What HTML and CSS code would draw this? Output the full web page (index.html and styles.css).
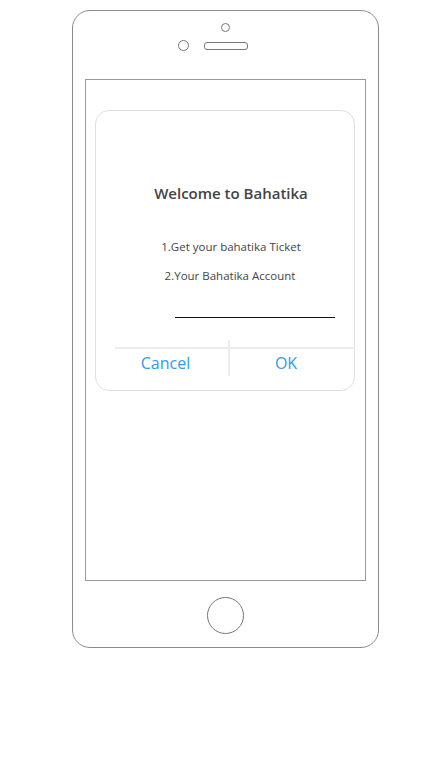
FILE: index.html
```html
<!DOCTYPE html>
<html>
<head>
<meta charset="utf-8">
<link rel="stylesheet" href="styles.css">
</head>
<body>
<div class="phone">
  <div class="top">
    <div class="camera"></div>
    <div class="sensors">
      <div class="lens"></div>
      <div class="speaker"></div>
    </div>
  </div>
  <div class="screen">
    <div class="dialog">
      <div class="title">Welcome to Bahatika</div>
      <div class="line l1">1.Get your bahatika Ticket</div>
      <div class="line l2">2.Your Bahatika Account</div>
      <div class="input"></div>
      <div class="actions">
        <div class="btn cancel">Cancel</div>
        <div class="divider"></div>
        <div class="btn ok">OK</div>
      </div>
    </div>
  </div>
  <div class="bottom">
    <div class="home"></div>
  </div>
</div>
</body>
</html>
```
FILE: styles.css
```css
html, body { margin: 0; padding: 0; background: #fff; }
body { font-family: "Open Sans", "Liberation Sans", sans-serif; }
.phone {
  box-sizing: border-box;
  width: 307px; height: 638px;
  margin: 10px 0 0 72px;
  border: 1px solid #8c8c8c;
  border-radius: 18px;
  display: flex; flex-direction: column;
}
.top { height: 68px; display: flex; flex-direction: column; align-items: center; }
.camera {
  box-sizing: border-box;
  width: 9px; height: 9px; border: 1px solid #777; border-radius: 50%;
  margin: 12px 0 0 0;
}
.sensors { display: flex; align-items: center; margin: 8px 0 0 -25px; }
.lens { box-sizing: border-box; width: 11px; height: 11px; border: 1px solid #777; border-radius: 50%; }
.speaker { box-sizing: border-box; width: 44px; height: 8px; border: 1px solid #777; border-radius: 3px; margin-left: 15px; }
.screen {
  box-sizing: border-box;
  height: 502px; margin: 0 12px;
  border: 1px solid #999;
  padding: 30px 10px 0 9px;
}
.dialog {
  box-sizing: border-box;
  height: 281px;
  border: 1px solid #e0e0e0;
  border-radius: 14px;
  display: flex; flex-direction: column; align-items: center;
  color: #444;
}
.title { margin-top: 72px; font-size: 15px; font-weight: 600; line-height: 20px; padding-left: 12px; }
.line { font-size: 11.5px; line-height: 16px; }
.l1 { margin-top: 36px; padding-left: 12px; }
.l2 { margin-top: 13px; padding-left: 10px; }
.input { width: 160px; height: 1px; background: #111; margin: 33px 0 0 60px; }
.actions {
  align-self: stretch; margin: 29px 0 0 19px;
  border-top: 2px solid #ececec;
  display: flex; height: 43px;
}
.btn { font-size: 16px; color: #2e9bf0; line-height: 20px; padding-top: 4px; }
.cancel { width: 113px; text-align: center; padding-right: 12px; box-sizing: border-box; }
.divider { width: 2px; background: #ececec; margin-top: -9px; height: 36px; }
.ok { flex: 1; text-align: center; padding-right: 12px; }
.bottom { flex: 1; display: flex; justify-content: center; align-items: center; }
.home { box-sizing: border-box; width: 37px; height: 37px; border: 1px solid #777; border-radius: 50%; margin-left: -1px; margin-top: 2px; }
```
